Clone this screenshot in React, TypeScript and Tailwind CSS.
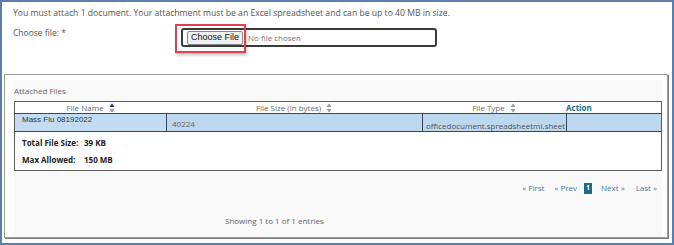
import type { ReactNode } from "react";

const sans = "font-['Open_Sans','Noto_Sans',sans-serif]";

function SortIcon({ active = false }: { readonly active?: boolean }) {
  return (
    <svg width="6" height="10" viewBox="0 0 6 10" className="ml-[5px] shrink-0" aria-hidden="true">
      <path d="M0.5 4L3 0.5L5.5 4Z" fill={active ? "#1c2f6b" : "#9a9a9a"} />
      <path d="M0.5 6L5.5 6L3 9.5Z" fill="#9a9a9a" />
    </svg>
  );
}

function HeaderCell({ children, active }: { readonly children: ReactNode; readonly active?: boolean }) {
  return (
    <div className="flex items-center justify-center text-[8px] leading-[11px] text-[#6b6b6b]">
      <span>{children}</span>
      <SortIcon active={active} />
    </div>
  );
}

export default function App() {
  return (
    <div className={`relative h-[245px] w-[674px] overflow-hidden border-2 border-[#5a7fad] bg-white ${sans}`}>
      <p className="ml-[11px] mt-[5px] h-[12px] whitespace-nowrap text-[8.65px] leading-[12px] text-[#555]">
        You must attach 1 document. Your attachment must be an Excel spreadsheet and can be up to 40 MB in size.
      </p>

      <div className="relative ml-[11px] mt-[9px] flex h-[19px]">
        <span className="w-[168px] text-[8.5px] leading-[9px] text-[#555]">Choose file: *</span>
        <div className="flex h-[19px] w-[256px] items-center rounded-[3px] border-2 border-[#3a3a3a] bg-white pl-[4px]">
          <button
            type="button"
            className="flex h-[14px] items-center rounded-[2px] border border-[#8a8a8a] bg-[#f0f0f0] px-[3px] font-['Liberation_Sans',Arial,sans-serif] text-[9px] leading-none text-[#111]"
          >
            Choose File
          </button>
          <span className="ml-[5px] text-[8px] text-[#777]">No file chosen</span>
        </div>
        {/* red highlight box drawn over the input */}
        <div className="pointer-events-none absolute left-[162px] top-[-4px] h-[29px] w-[71px] border-2 border-[#e0414e] shadow-[1px_2px_3px_rgba(0,0,0,0.25)]" />
      </div>

      <div className="ml-[2px] mt-[27px] h-[164px] w-[664px] border border-[#9c9c9c] pl-[9px] pr-[5px] pt-[5px] shadow-[1px_1px_0_#7c7c7c]">
        <div className="h-full bg-[#f9f9f9]">
          <p className="h-[12px] pt-[5px] text-[8px] leading-[12px] text-[#666]" style={{ boxSizing: "content-box" }}>
            Attached Files
          </p>

          <div className="mt-[4px] border border-[#5a5a5a] bg-white">
            <div className="grid h-[11px] grid-cols-[151px_256px_144px_1fr]">
              <HeaderCell active>File Name</HeaderCell>
              <HeaderCell>File Size (in bytes)</HeaderCell>
              <HeaderCell>File Type</HeaderCell>
              <div className="text-[8px] font-bold leading-[11px] text-[#1d6a86]">Action</div>
            </div>

            <div className="grid h-[19px] grid-cols-[151px_256px_144px_1fr] border-y border-[#33475f] bg-[#bdd7ef]">
              <div className="bg-[#c3dcf1] pl-[7px] pt-[1px] font-['Liberation_Sans',Arial,sans-serif] text-[8px] leading-[10px] text-[#333]">
                Mass Flu 08192022
              </div>
              <div className="flex items-center border-l border-[#33475f] pl-[5px] pt-[2px] text-[8px] text-[#666]">40224</div>
              <div className="flex items-end border-l border-[#33475f] pl-[3px] text-[8px] leading-[11px] text-[#555]">
                officedocument.spreadsheetml.sheet
              </div>
              <div className="flex items-center justify-end border-l border-[#33475f] pr-[4px] text-[6px] text-[#9aa]">-</div>
            </div>

            <div className="h-[38px] pl-[7px] pt-[2px] text-[8px] font-bold leading-[17px] text-[#222]">
              <div className="flex">
                <span className="w-[62px]">Total File Size:</span>
                <span>39 KB</span>
              </div>
              <div className="flex">
                <span className="w-[62px]">Max Allowed:</span>
                <span>150 MB</span>
              </div>
            </div>
          </div>

          <nav className="mt-[11px] flex h-[12px] items-center justify-end pr-[5px] text-[8px] leading-[12px] text-[#4b79a1]">
            <span>« First</span>
            <span className="ml-[10px]">« Prev</span>
            <span className="ml-[7px] flex h-[11px] w-[8px] items-center justify-center bg-[#1d6a89] text-[7px] font-bold text-white">1</span>
            <span className="ml-[9px]">Next »</span>
            <span className="ml-[11px]">Last »</span>
          </nav>

          <p className="ml-[211px] mt-[21px] h-[12px] text-[8px] leading-[12px] text-[#666]">Showing 1 to 1 of 1 entries</p>
        </div>
      </div>
    </div>
  );
}
